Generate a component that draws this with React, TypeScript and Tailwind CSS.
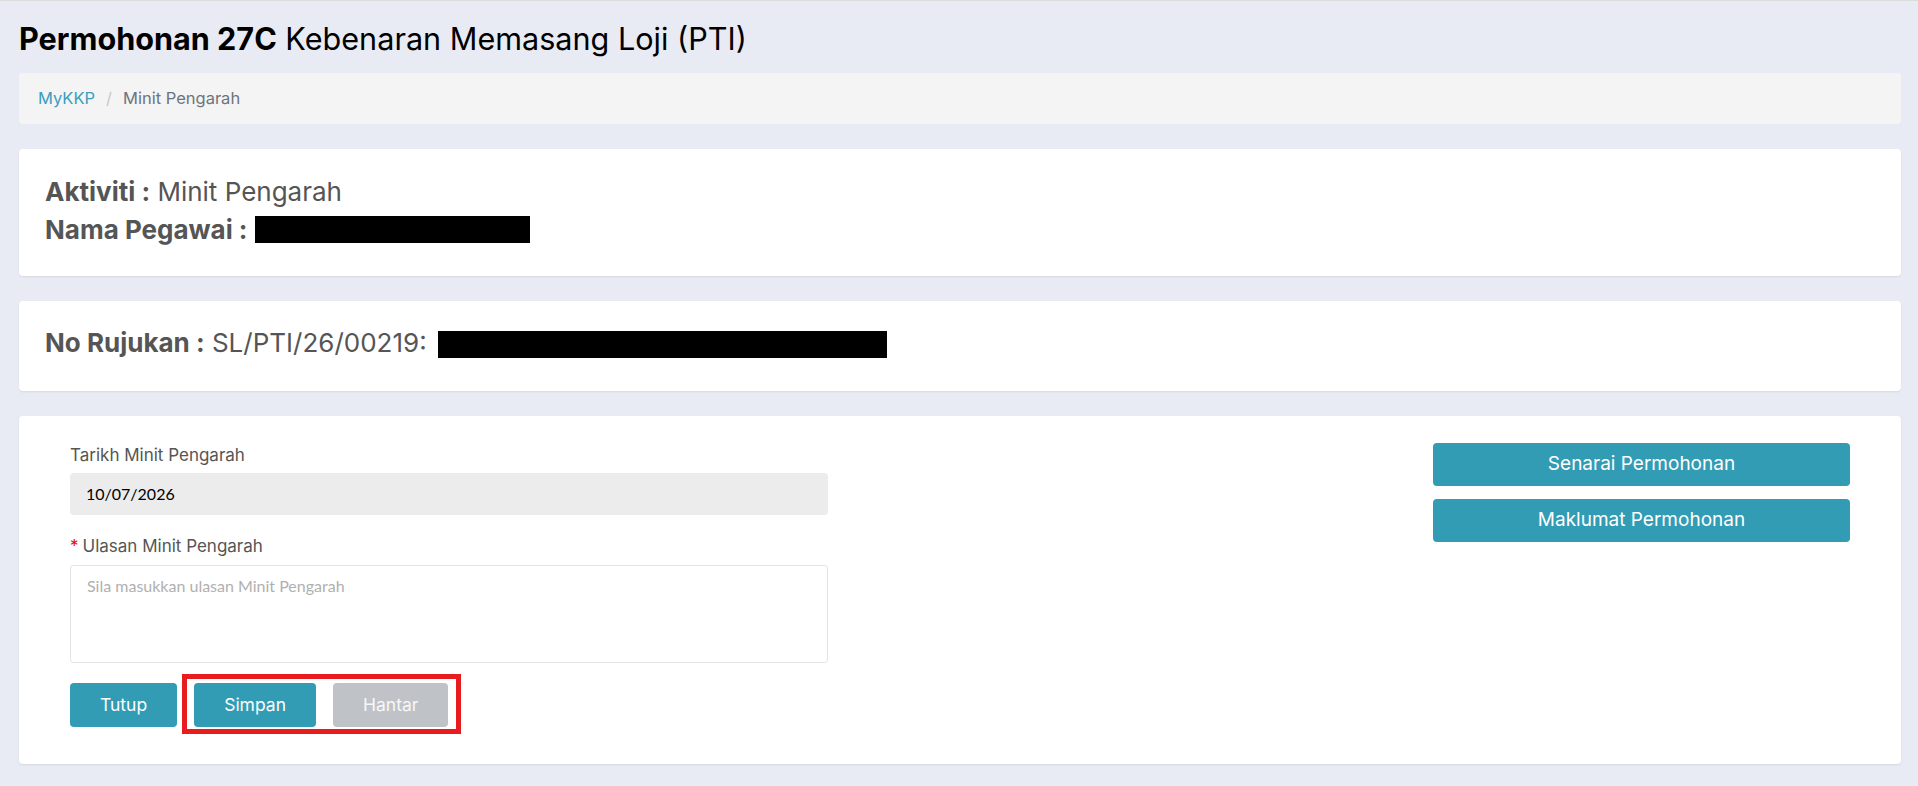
export default function App() {
  return (
    <div className="min-h-[786px] bg-[#e9ebf4] border-t border-[#dcdcdc] pl-[19px] pr-[17px] pb-[22px] font-['Inter',sans-serif]">
      {/* page title */}
      <h1 className="pt-[18px] text-[30.6px] leading-[40px] text-black">
        <span className="font-bold">Permohonan 27C</span> Kebenaran Memasang Loji (PTI)
      </h1>

      {/* breadcrumb */}
      <nav className="mt-[14px] h-[51px] rounded bg-[#f4f4f4] px-[19px] flex items-center gap-[11px] text-[16.5px]">
        <a className="text-[#3a9fbd]">MyKKP</a>
        <span className="text-[#c8c8c8]">/</span>
        <span className="text-[#6c757d]">Minit Pengarah</span>
      </nav>

      {/* activity */}
      <div className="mt-[25px] h-[127px] rounded bg-white px-[26px] pt-[24px] shadow-[0_1px_2px_rgba(0,0,0,0.08)] text-[26px] leading-[38px] text-[#555]">
        <div>
          <span className="font-bold">Aktiviti :</span> Minit Pengarah
        </div>
        <div>
          <span className="font-bold">Nama Pegawai :</span>{" "}
          <span className="inline-block w-[275px] h-[27px] bg-black align-[-4px]" />
        </div>
      </div>

      {/* reference no */}
      <div className="mt-[25px] h-[90px] rounded bg-white px-[26px] pt-[23px] shadow-[0_1px_2px_rgba(0,0,0,0.08)] text-[26px] leading-[38px] text-[#555]">
        <span className="font-bold">No Rujukan :</span> SL/PTI/26/00219:{" "}
        <span className="ml-[4px] inline-block w-[449px] h-[27px] bg-black align-[-6px]" />
      </div>

      {/* form */}
      <div className="mt-[25px] h-[348px] rounded bg-white px-[51px] pt-[27px] shadow-[0_1px_2px_rgba(0,0,0,0.08)] flex justify-between">
        <div className="w-[758px]">
          <label className="block text-[17px] leading-[24px] text-[#555]">Tarikh Minit Pengarah</label>
          <div className="mt-[6px] h-[42px] rounded bg-[#ececec] px-4 flex items-center font-['Lato',sans-serif] text-[16px] text-black">
            10/07/2026
          </div>

          <label className="mt-[19px] block text-[17px] leading-[24px] text-[#555]">
            <span className="text-red-600 mr-[4px]">*</span>Ulasan Minit Pengarah
          </label>
          <textarea
            className="mt-[7px] block w-full h-[98px] resize-none rounded-[3px] border border-[#e4e4e4] px-4 pt-[9px] font-['Lato',sans-serif] text-[16px] leading-[22px] placeholder:text-[#b0b0b0] outline-none"
            placeholder="Sila masukkan ulasan Minit Pengarah"
          />

          <div className="mt-[11px] flex items-start gap-[5px]">
            <button className="mt-[9px] h-[44px] rounded bg-[#319cb4] px-[30px] text-[17.5px] text-white">Tutup</button>
            <div className="border-[5px] border-[#e81c1f] pl-[7px] pr-[8px] pt-[4px] pb-[2px] flex gap-[17px]">
              <button className="h-[44px] rounded bg-[#319cb4] px-[30px] text-[17.5px] text-white">Simpan</button>
              <button className="h-[44px] rounded bg-[#bfc3c7] px-[30px] text-[17.5px] text-[#f7f7f7]">Hantar</button>
            </div>
          </div>
        </div>

        <div className="w-[417px] flex flex-col gap-[13px]">
          <button className="h-[43px] rounded bg-[#319cb4] text-[19px] text-white">Senarai Permohonan</button>
          <button className="h-[43px] rounded bg-[#319cb4] text-[19px] text-white">Maklumat Permohonan</button>
        </div>
      </div>
    </div>
  );
}
